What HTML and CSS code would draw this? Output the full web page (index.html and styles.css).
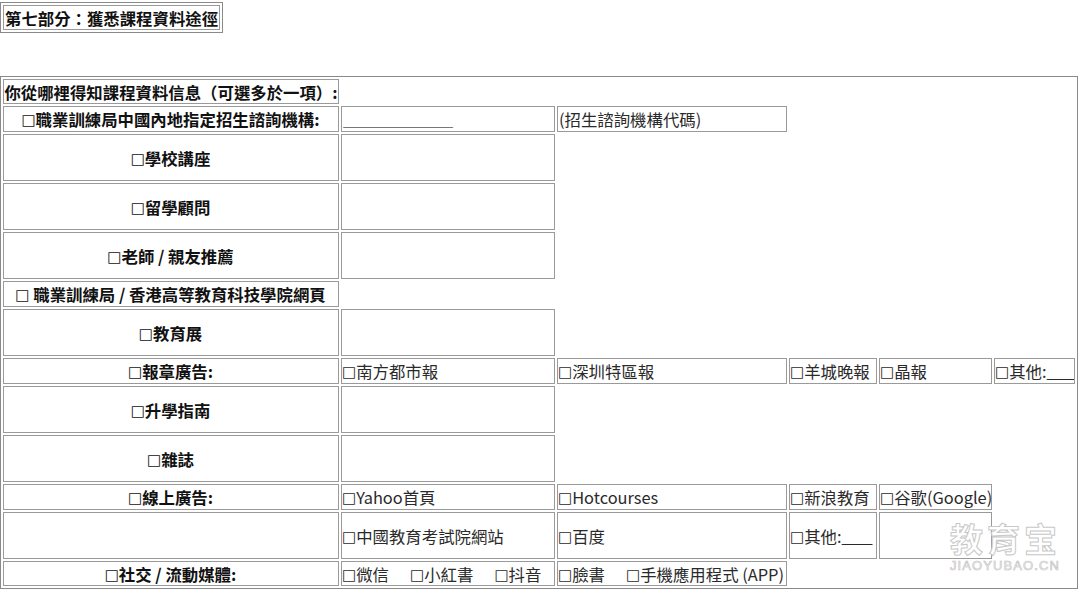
FILE: index.html
```html
<!DOCTYPE html>
<html lang="zh-Hant">
<head>
<meta charset="utf-8">
<title>第七部分</title>
<link rel="stylesheet" href="styles.css">
</head>
<body>
<table class="grid title"><tr><th>第七部分：獲悉課程資料途徑</th></tr></table>
<table class="grid main">
<colgroup><col class="c1"><col class="c2"><col class="c3"><col class="c4"><col class="c5"><col class="c6"></colgroup>
<tr class="r1"><th class="q">你從哪裡得知課程資料信息（可選多於一項）:</th></tr>
<tr class="r2"><th><span class="b">□</span>職業訓練局中國內地指定招生諮詢機構:</th><td class="line">______________</td><td>(招生諮詢機構代碼)</td></tr>
<tr class="tall"><th><span class="b">□</span>學校講座</th><td></td></tr>
<tr class="tall"><th><span class="b">□</span>留學顧問</th><td></td></tr>
<tr class="tall"><th><span class="b">□</span>老師 / 親友推薦</th><td></td></tr>
<tr class="r2"><th><span class="b">□</span> 職業訓練局 / 香港高等教育科技學院網頁</th></tr>
<tr class="tall"><th><span class="b">□</span>教育展</th><td></td></tr>
<tr class="r2"><th><span class="b">□</span>報章廣告:</th><td><span class="b">□</span>南方都市報</td><td><span class="b">□</span>深圳特區報</td><td><span class="b">□</span>羊城晚報</td><td><span class="b">□</span>晶報</td><td><span class="b">□</span>其他:<span class="us">____</span></td></tr>
<tr class="tall"><th><span class="b">□</span>升學指南</th><td></td></tr>
<tr class="tall"><th><span class="b">□</span>雜誌</th><td></td></tr>
<tr class="r2"><th><span class="b">□</span>線上廣告:</th><td><span class="b">□</span>Yahoo首頁</td><td><span class="b">□</span>Hotcourses</td><td><span class="b">□</span>新浪教育</td><td><span class="b">□</span>谷歌(Google)</td></tr>
<tr class="tall"><th></th><td><span class="b">□</span>中國教育考試院網站</td><td><span class="b">□</span>百度</td><td><span class="b">□</span>其他:<span class="us">____</span></td><td></td></tr>
<tr class="r3"><th><span class="b">□</span>社交 / 流動媒體:</th><td><span class="b">□</span>微信 &nbsp; &nbsp; &nbsp;<span class="b">□</span>小紅書 &nbsp; &nbsp; &nbsp;<span class="b">□</span>抖音</td><td><span class="b">□</span>臉書 &nbsp; &nbsp; &nbsp;<span class="b">□</span>手機應用程式 (APP)</td></tr>
</table>
<div class="mark"><div class="mark-cn">教育宝</div><div class="mark-en">JIAOYUBAO.CN</div></div>
</body>
</html>
```
FILE: styles.css
```css
html, body { margin: 0; padding: 0; background: #fff; }
body {
  position: relative;
  width: 1080px;
  height: 594px;
  overflow: hidden;
  font-family: "Noto Sans CJK TC", "Noto Sans", sans-serif;
  font-size: 16.4px;
  color: #2a2a2a;
}
.grid { border-collapse: separate; border-spacing: 2px; border: 1px solid #8a8a8a; }
.grid th, .grid td {
  box-sizing: border-box;
  border: 1px solid #9a9a9a;
  padding: 0 1px;
  line-height: 20px;
  white-space: nowrap;
  overflow: hidden;
}
.grid th { font-weight: 700; color: #111; text-align: center; }
.grid td { font-weight: 400; text-align: left; }
.title { margin: 2px 0 43px 0; }
.title th { height: 25px; padding: 0 1px; }
.main { width: 1078px; table-layout: fixed; }
.c1 { width: 336px; }
.c2 { width: 214px; }
.c3 { width: 230px; }
.c4 { width: 88px; }
.c5 { width: 113px; }
.r1 th { height: 25px; }
.r2 th, .r2 td { height: 26px; }
.r3 th, .r3 td { height: 25px; }
.tall th, .tall td { height: 47px; }
.grid .q { padding: 0; }
.line { color: #777; letter-spacing: -1.4px; }
.us { letter-spacing: -1.8px; }
.b { font-family: "DejaVu Sans", sans-serif; font-size: 15px; margin-left: -1px; line-height: 0; vertical-align: 1px; }
.mark { position: absolute; left: 950px; top: 520px; width: 112px; color: #fff; text-align: left; }
.mark-cn { font-size: 33px; line-height: 36px; letter-spacing: 4px; font-weight: 700; -webkit-text-stroke: 1px #c8c8c8; }
.mark-en { font-family: "Liberation Sans", sans-serif; font-size: 13px; line-height: 14px; margin-top: 3px; letter-spacing: 1.1px; -webkit-text-stroke: .6px #bdbdbd; }
```
